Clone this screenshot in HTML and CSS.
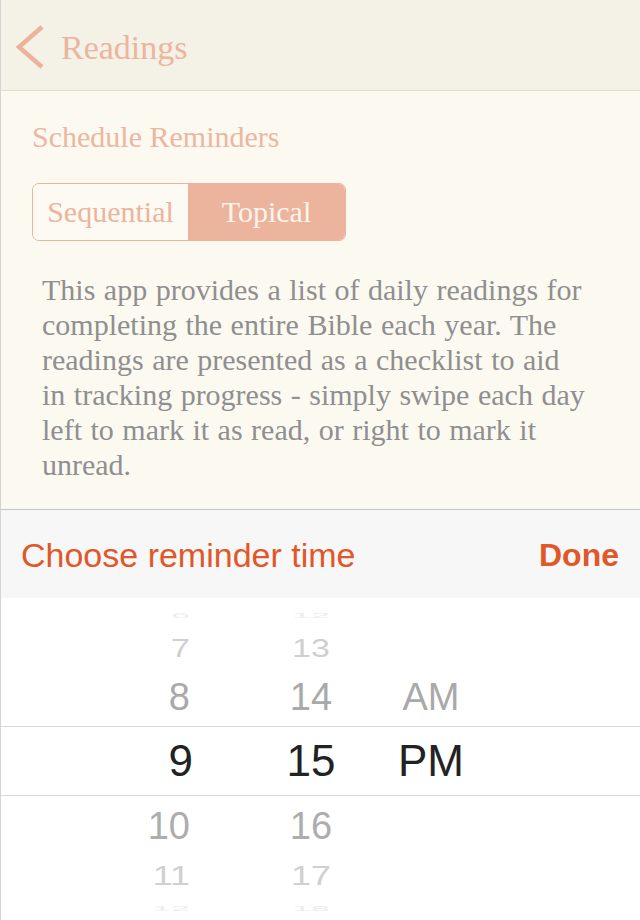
FILE: index.html
```html
<!DOCTYPE html>
<html lang="en">
<head>
<meta charset="utf-8">
<title>Schedule Reminders</title>
<link rel="stylesheet" href="styles.css">
</head>
<body>
<div class="screen">
  <header class="nav">
    <svg class="back" width="30" height="50" viewBox="0 0 30 50" aria-hidden="true">
      <polyline points="28,7 5,27 28,47" fill="none" stroke="#ecb39a" stroke-width="4.4"/>
    </svg>
    <span class="nav-title">Readings</span>
  </header>

  <main class="content">
    <h1 class="section-title">Schedule Reminders</h1>
    <div class="segmented">
      <span class="seg">Sequential</span>
      <span class="seg seg-active">Topical</span>
    </div>
    <p class="desc">This app provides a list of daily readings for<br>completing the entire Bible each year. The<br>readings are presented as a checklist to aid<br>in tracking progress - simply swipe each day<br>left to mark it as read, or right to mark it<br>unread.</p>
  </main>

  <div class="toolbar">
    <span class="toolbar-title">Choose reminder time</span>
    <span class="done">Done</span>
  </div>

  <div class="picker">
    <div class="row row-edge-top"><span class="h"><i>6</i></span><span class="m"><i>12</i></span><span class="p"></span></div>
    <div class="row row-far-top"><span class="h"><i>7</i></span><span class="m"><i>13</i></span><span class="p"></span></div>
    <div class="row row-near-top"><span class="h"><i>8</i></span><span class="m"><i>14</i></span><span class="p"><i>AM</i></span></div>
    <div class="row row-sel"><span class="h"><i>9</i></span><span class="m"><i>15</i></span><span class="p"><i>PM</i></span></div>
    <div class="row row-near-bot"><span class="h"><i>10</i></span><span class="m"><i>16</i></span><span class="p"></span></div>
    <div class="row row-far-bot"><span class="h"><i>11</i></span><span class="m"><i>17</i></span><span class="p"></span></div>
    <div class="row row-edge-bot"><span class="h"><i>12</i></span><span class="m"><i>18</i></span><span class="p"></span></div>
  </div>
</div>
</body>
</html>
```

FILE: styles.css
```css
html, body {
  margin: 0;
  padding: 0;
  background: #ffffff;
}

.screen {
  width: 640px;
  height: 920px;
  overflow: hidden;
  box-sizing: border-box;
  border-left: 1px solid #d4d4d4;
  display: flex;
  flex-direction: column;
}

/* Navigation bar */
.nav {
  height: 90px;
  flex: none;
  background: #f4f1e7;
  border-bottom: 1px solid #e0ddd5;
  display: flex;
  align-items: center;
}

.back {
  display: block;
  margin-left: 13px;
  flex: none;
}

.nav-title {
  margin-left: 17px;
  font-family: "Liberation Serif", serif;
  font-size: 34px;
  line-height: 34px;
  color: #ecb59e;
  margin-top: 6px;
}

/* Content */
.content {
  height: 418px;
  flex: none;
  box-sizing: border-box;
  background: #fcf9f1;
  padding: 28px 0 0 31px;
  margin: 0;
}

.section-title {
  margin: 0;
  font-family: "Liberation Serif", serif;
  font-weight: normal;
  font-size: 30px;
  line-height: 36px;
  color: #ecb7a0;
}

.segmented {
  margin-top: 28px;
  width: 314px;
  height: 58px;
  box-sizing: border-box;
  border: 1.5px solid #ecb49c;
  border-radius: 7px;
  overflow: hidden;
  display: flex;
}

.seg {
  width: 155px;
  display: flex;
  align-items: center;
  justify-content: center;
  font-family: "Liberation Serif", serif;
  font-size: 30px;
  color: #ecb49c;
  background: #fdfaf3;
}

.seg-active {
  flex: 1;
  width: auto;
  background: #ecb49c;
  color: #fcf5ec;
}

.desc {
  margin: 31px 0 0 10px;
  width: 570px;
  font-family: "Liberation Serif", serif;
  font-size: 30px;
  line-height: 35px;
  word-spacing: 1px;
  color: #8f8f8f;
}

/* Toolbar */
.toolbar {
  height: 88px;
  flex: none;
  background: #f7f7f7;
  border-top: 1px solid #c6c6c6;
  display: flex;
  align-items: center;
  justify-content: space-between;
  padding: 0 21px 0 20px;
  font-family: "Liberation Sans", Arial, sans-serif;
  color: #e0582a;
}

.toolbar-title {
  font-size: 34px;
  margin-top: 2px;
}

.done {
  font-size: 32px;
  font-weight: bold;
  margin-top: 2px;
}

/* Picker */
.picker {
  flex: 1;
  background: #ffffff;
  display: flex;
  flex-direction: column;
  font-family: "Liberation Sans", Arial, sans-serif;
}

.row {
  display: flex;
  align-items: center;
  flex: none;
  box-sizing: border-box;
}

.row i {
  font-style: normal;
  display: inline-block;
}

.h {
  width: 189px;
  text-align: right;
}

.m {
  width: 122px;
  margin-left: 60px;
  text-align: center;
}

.p {
  width: 118px;
  text-align: center;
}

.row-edge-top,
.row-edge-bot {
  font-size: 34px;
  color: #ededed;
}

.row-edge-top { height: 34px; }
.row-edge-bot { height: 24px; }

.row-edge-top i,
.row-edge-bot i {
  transform: scaleY(0.22);
}

.row-far-top {
  height: 33px;
  font-size: 34px;
  color: #cfcfcf;
}

.row-far-top i {
  transform: scaleY(0.74);
}

.row-near-top {
  height: 61px;
  font-size: 38px;
  color: #a9a9a9;
}

.row-near-top i {
  margin-top: 4px;
}

.row-sel {
  height: 70px;
  font-size: 44px;
  color: #222222;
  border-top: 1px solid #dadada;
  border-bottom: 1px solid #dadada;
}

.row-sel .h i {
  margin-right: -3px;
}

.row-near-bot {
  height: 60px;
  font-size: 38px;
  color: #adadad;
}

.row-far-bot {
  height: 40px;
  font-size: 36px;
  color: #d0d0d0;
}

.row-far-bot i {
  transform: scaleY(0.78);
}
```
